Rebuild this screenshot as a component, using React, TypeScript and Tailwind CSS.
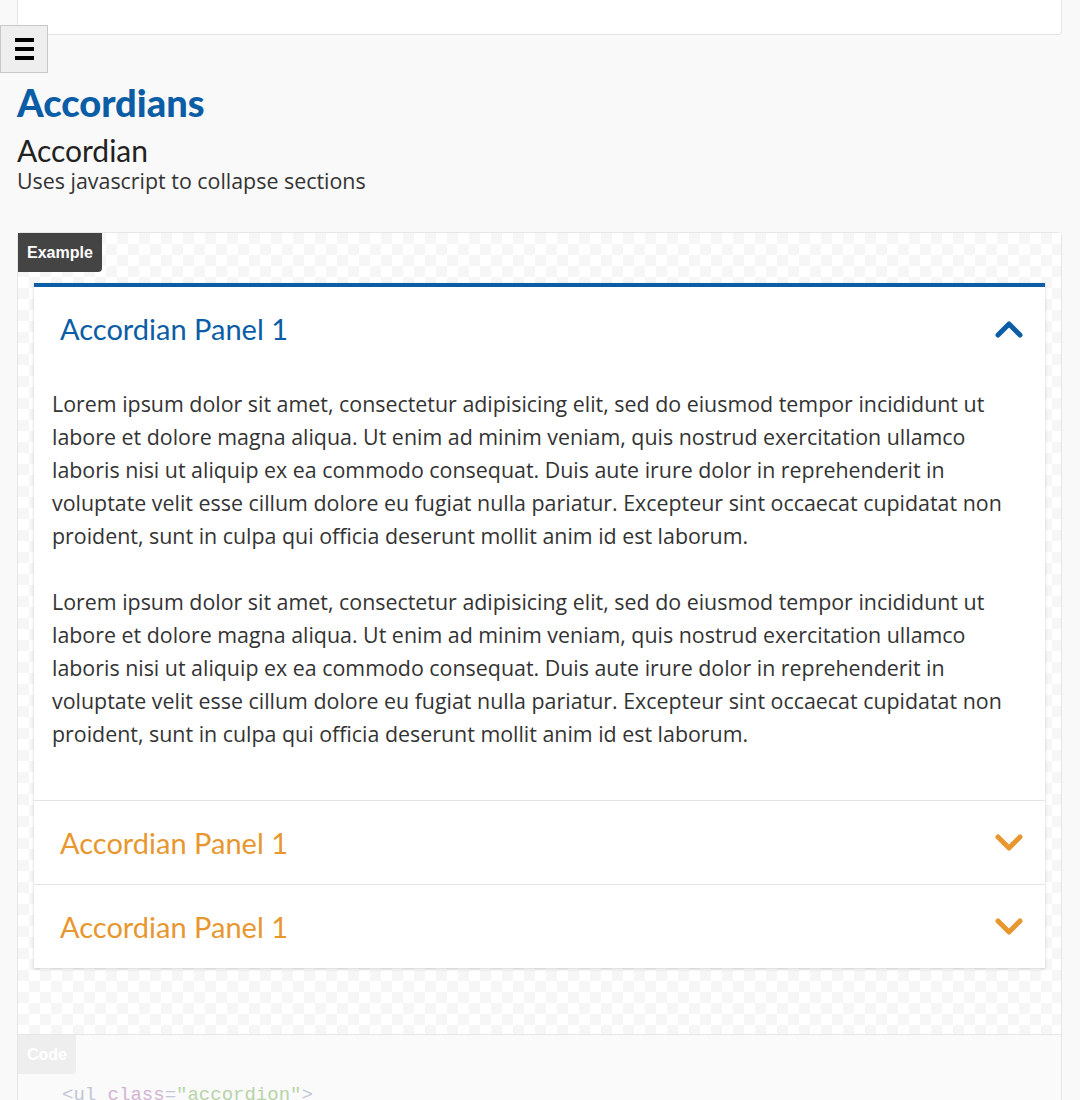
import React from "react";

const LOREM =
  "Lorem ipsum dolor sit amet, consectetur adipisicing elit, sed do eiusmod tempor incididunt ut labore et dolore magna aliqua. Ut enim ad minim veniam, quis nostrud exercitation ullamco laboris nisi ut aliquip ex ea commodo consequat. Duis aute irure dolor in reprehenderit in voluptate velit esse cillum dolore eu fugiat nulla pariatur. Excepteur sint occaecat cupidatat non proident, sunt in culpa qui officia deserunt mollit anim id est laborum.";

function Chevron({ up, color }: { up?: boolean; color: string }) {
  return (
    <svg width="28" height="18" viewBox="0 0 28 18" fill="none">
      <polyline
        points={up ? "3,15 14,4 25,15" : "3,3 14,14 25,3"}
        stroke={color}
        strokeWidth="5"
        strokeLinecap="round"
        strokeLinejoin="round"
      />
    </svg>
  );
}

function Panel({ open }: { open?: boolean }) {
  return (
    <div className={open ? "" : "border-t border-[#e4e4e4]"}>
      <div className="flex h-[83px] items-center justify-between pl-[26px] pr-[22px]">
        <span
          className={
            "font-['Lato',sans-serif] text-[29px] " +
            (open ? "text-[#0b5da6]" : "text-[#e8972f]")
          }
        >
          Accordian Panel 1
        </span>
        <Chevron up={open} color={open ? "#0b5da6" : "#e8972f"} />
      </div>
      {open && (
        <div className="space-y-[33px] px-[18px] pt-[17px] pb-[50px] font-['Open_Sans',sans-serif] text-[21.4px] leading-[33px] text-[#333]">
          <p>{LOREM}</p>
          <p>{LOREM}</p>
        </div>
      )}
    </div>
  );
}

export default function App() {
  return (
    <div className="relative min-h-[1100px] bg-[#f9f9f9] font-['Lato',sans-serif] text-[#222]">
      <div className="mx-[17px] mr-[18px] h-[35px] rounded-b border border-t-0 border-[#e5e5e5] bg-white" />

      {/* menu toggle */}
      <button className="absolute left-0 top-[25px] flex h-[48px] w-[48px] flex-col items-center justify-center gap-[5px] border border-[#c8c8c8] bg-[#eeeeee]">
        <span className="block h-[4px] w-[19px] bg-black" />
        <span className="block h-[4px] w-[19px] bg-black" />
        <span className="block h-[4px] w-[19px] bg-black" />
      </button>

      <div className="px-[17px] pr-[18px]">
        <h1 className="mt-[45px] text-[38px] font-black leading-[44px] text-[#0b5da6]">
          Accordians
        </h1>
        <h2 className="mt-[8px] text-[30px] leading-[36px] text-[#222]">Accordian</h2>
        <p className="font-['Open_Sans',sans-serif] text-[21.4px] leading-[26px] text-[#333]">
          Uses javascript to collapse sections
        </p>

        <div className="mt-[38px] rounded border border-[#e6e6e6] bg-white">
          <div className="bg-[repeating-conic-gradient(#f6f6f6_0%_25%,#ffffff_0%_50%)] bg-[length:22px_22px] pb-[66px]">
            <div className="inline-block rounded-br bg-[#444] px-[9px] py-[9px] font-['Liberation_Sans',sans-serif] text-[16px] font-bold leading-[21px] text-white">
              Example
            </div>
            <div className="mx-[16px] mt-[11px] border-t-4 border-[#0b5da6] bg-white shadow-[0_1px_3px_rgba(0,0,0,0.18)]">
              <Panel open />
              <Panel />
              <Panel />
            </div>
          </div>
          <div className="border-t border-[#e6e6e6] bg-[#fafafa] pb-[20px]">
            <div className="inline-block rounded-br bg-[#eeeeee] px-[9px] py-[9px] font-['Liberation_Sans',sans-serif] text-[16px] font-bold leading-[21px] text-white">
              Code
            </div>
            <pre className="mt-[9px] pl-[44px] font-['Liberation_Mono',monospace] text-[19px] leading-[24px] text-[#c0c6d6]">
              &lt;ul <span className="text-[#d3b3d3]">class</span>=
              <span className="text-[#b7d4a8]">"accordion"</span>&gt;
            </pre>
          </div>
        </div>
      </div>
    </div>
  );
}
